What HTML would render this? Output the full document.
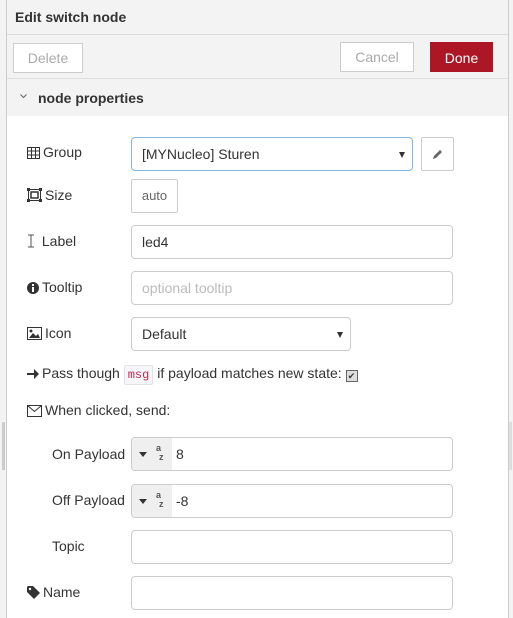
<!DOCTYPE html>
<html><head><style>
body{margin:0;width:513px;height:618px;overflow:hidden;background:#f3f3f3;font-family:"Liberation Sans",Arial,sans-serif;font-size:14px;color:#333;position:relative}
.panel{position:absolute;left:6px;top:0;width:501px;height:618px;border-left:1px solid #ccc;border-right:1px solid #ccc;background:#f3f3f3}
.a{position:absolute}
.hdr{left:0;top:0;width:501px;height:35px;border-bottom:1px solid #ddd;font-weight:bold;line-height:35px;padding-left:8px;box-sizing:border-box}
.btn{position:absolute;box-sizing:border-box;border:1px solid #ccc;background:#fff;color:#aaa;text-align:center}
.body{left:0;top:116px;width:501px;height:502px;background:#fff}
.inp{position:absolute;box-sizing:border-box;border:1px solid #ccc;border-radius:4px;background:#fff;height:34px;line-height:32px;padding-left:10px}
.lbl{position:absolute;left:20px;line-height:20px}
.lbl svg{vertical-align:-2px;margin-right:3px}
.caret{position:absolute;right:7px;top:14px;width:0;height:0;border-left:3px solid transparent;border-right:3px solid transparent;border-top:6px solid #333}
.tb{position:absolute;left:0;top:0;width:40px;height:32px;background:#efefef;border-radius:4px 0 0 4px}
</style></head><body>
<div class="a" style="left:2px;top:422px;width:3px;height:48px;background:#ccc"></div>
<div class="a" style="left:509px;top:422px;width:3px;height:48px;background:#ddd"></div>
<div class="panel">
<div class="a hdr">Edit switch node</div>
<div class="btn" style="left:6px;top:43px;width:70px;height:30px;line-height:28px">Delete</div>
<div class="btn" style="left:333px;top:42px;width:74px;height:30px;line-height:28px">Cancel</div>
<div class="btn" style="left:423px;top:42px;width:63px;height:30px;line-height:30px;background:#ad1625;border-color:#ad1625;color:#fff">Done</div>
<div class="a" style="left:0;top:78px;width:501px;border-top:1px solid #ddd"></div>
<svg class="a" style="left:13px;top:94px" width="7" height="5" viewBox="0 0 7 5"><path d="M0.5 0.5l3 3 3-3" fill="none" stroke="#666"/></svg>
<div class="a" style="left:31px;top:90px;font-weight:bold">node properties</div>
<div class="a body"></div>

<div class="lbl" style="top:142px"><svg width="13" height="12" viewBox="0 0 13 12"><rect x="0.5" y="0.5" width="12" height="11" fill="none" stroke="#333"/><path d="M0 4h13M0 8h13M4.5 0v12M8.5 0v12" stroke="#333"/></svg>Group</div>
<div class="inp" style="left:124px;top:137px;width:282px;border-color:#85b4e0">[MYNucleo] Sturen<div class="caret"></div></div>
<div class="inp" style="left:414px;top:137px;width:33px;border-radius:2px"><svg width="12" height="12" viewBox="0 0 12 12" style="position:absolute;left:10px;top:10px"><path d="M1 11l1-3 6-6 2 2-6 6z" fill="#666"/></svg></div>

<div class="lbl" style="top:185px"><svg width="15" height="14" viewBox="0 0 15 14"><rect x="1.5" y="1.5" width="12" height="11" fill="none" stroke="#333"/><rect x="4" y="4" width="7" height="6" fill="none" stroke="#333" stroke-width="1.5"/><path d="M0 0h3v3H0zM12 0h3v3h-3zM0 11h3v3H0zM12 11h3v3h-3z" fill="#333"/></svg>Size</div>
<div class="inp" style="left:124px;top:179px;width:47px;border-radius:2px;padding:0;text-align:center;color:#666;font-size:13px">auto</div>

<div class="lbl" style="top:231px"><svg width="8" height="14" viewBox="0 0 8 14"><path d="M1 1h6M1 13h6M4 1v12" stroke="#555" fill="none"/></svg> Label</div>
<div class="inp" style="left:124px;top:225px;width:322px">led4</div>

<div class="lbl" style="top:277px"><svg width="12" height="12" viewBox="0 0 12 12"><circle cx="6" cy="6" r="6" fill="#333"/><rect x="5" y="5" width="2" height="5" fill="#fff"/><rect x="5" y="2" width="2" height="2" fill="#fff"/></svg>Tooltip</div>
<div class="inp" style="left:124px;top:271px;width:322px;color:#bbb">optional tooltip</div>

<div class="lbl" style="top:323px"><svg width="15" height="13" viewBox="0 0 15 13"><rect x="0.5" y="0.5" width="14" height="12" fill="none" stroke="#333"/><path d="M2 11l4-5 3 3 2-2 2 4z" fill="#333"/><circle cx="4" cy="4" r="1.5" fill="#333"/></svg>Icon</div>
<div class="inp" style="left:124px;top:317px;width:220px">Default<div class="caret"></div></div>

<div class="lbl" style="top:363px"><svg width="12" height="12" viewBox="0 0 12 12"><path d="M0 5h7V1l5 5-5 5V7H0z" fill="#333"/></svg>Pass though <span style="display:inline-block;background:#f7f7f9;border:1px solid #e1e1e8;border-radius:2px;color:#c7254e;font-family:'Liberation Mono',monospace;font-size:12px;line-height:18px;padding:0 3px">msg</span> if payload matches new state: <span style="display:inline-block;width:10px;height:10px;border:1px solid #666;background:#ddd;vertical-align:-1px;font-size:9px;line-height:10px;text-align:center">&#10004;</span></div>

<div class="lbl" style="top:400px"><svg width="15" height="12" viewBox="0 0 15 12"><rect x="0.5" y="0.5" width="14" height="11" fill="none" stroke="#333"/><path d="M0.5 0.5l7 6 7-6" fill="none" stroke="#333"/></svg>When clicked, send:</div>

<div class="lbl" style="left:45px;top:444px">On Payload</div>
<div class="inp" style="left:124px;top:437px;width:322px;padding-left:44px"><div class="tb"><div class="caret" style="left:7px;right:auto;top:14px;border-width:5px 4px 0 4px"></div><span style="position:absolute;left:24px;top:-6px;font-size:9px;font-weight:bold;color:#555">a</span><span style="position:absolute;left:27px;top:3px;font-size:9px;font-weight:bold;color:#555">z</span></div>8</div>

<div class="lbl" style="left:45px;top:490px">Off Payload</div>
<div class="inp" style="left:124px;top:484px;width:322px;padding-left:44px"><div class="tb"><div class="caret" style="left:7px;right:auto;top:14px;border-width:5px 4px 0 4px"></div><span style="position:absolute;left:24px;top:-6px;font-size:9px;font-weight:bold;color:#555">a</span><span style="position:absolute;left:27px;top:3px;font-size:9px;font-weight:bold;color:#555">z</span></div>-8</div>

<div class="lbl" style="left:45px;top:536px">Topic</div>
<div class="inp" style="left:124px;top:530px;width:322px"></div>

<div class="lbl" style="top:582px"><svg width="13" height="13" viewBox="0 0 13 13"><path d="M0 1v5l7 7 6-6-7-7H1z" fill="#333"/><circle cx="3" cy="3" r="1.2" fill="#fff"/></svg>Name</div>
<div class="inp" style="left:124px;top:576px;width:322px"></div>
</div>
</body></html>
